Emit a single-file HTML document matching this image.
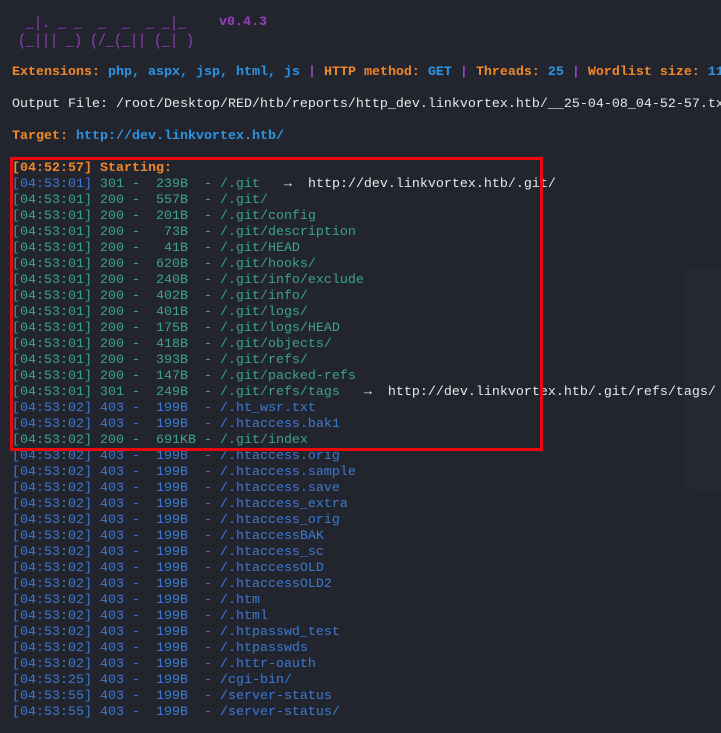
<!DOCTYPE html>
<html><head><meta charset="utf-8"><style>
html,body{margin:0;padding:0;background:#23252e;width:721px;height:733px;overflow:hidden;}
body{position:relative;font-family:"Liberation Mono","DejaVu Sans Mono",monospace;font-size:13.33px;}
.l{position:absolute;left:12px;white-space:pre;line-height:16px;}
.o{color:#f0882a;font-weight:bold}
.b{color:#2b96e6;font-weight:bold}
.p{color:#9a3fc0;font-weight:bold}
.w{color:#e8e8e8}
.t{color:#3aa38e}
.u{color:#3b7ad4}
.box{position:absolute;left:10px;top:157px;width:527px;height:288px;border:3px solid #e8080d;}
.sb{position:absolute;left:683px;top:268px;width:60px;height:222px;border-radius:12px;background:#252830;}
</style></head><body>
<div class="sb"></div>
<div class="l p" style="top:15px;left:18px;font-weight:normal;line-height:15px;font-size:13.33px;transform:scaleY(1.2);transform-origin:0 0"> _|. _ _  _  _  _ _|_
(_||| _) (/_(_|| (_| )</div>
<div class="l p" style="top:15px;left:219px">v0.4.3</div>
<div class="l" style="top:65px"><span class="o">Extensions: </span><span class="b">php, aspx, jsp, html, js</span><span class="p"> | </span><span class="o">HTTP method: </span><span class="b">GET</span><span class="p"> | </span><span class="o">Threads: </span><span class="b">25</span><span class="p"> | </span><span class="o">Wordlist size: </span><span class="b">11460</span></div>
<div class="l w" style="top:97px">Output File: /root/Desktop/RED/htb/reports/http_dev.linkvortex.htb/__25-04-08_04-52-57.txt</div>
<div class="l" style="top:129px"><span class="o">Target: </span><span class="b">http://dev.linkvortex.htb/</span></div>
<div class="l" style="top:161px"><span class="o">[04:52:57] Starting: </span></div>
<div class="l" style="top:177px"><span class="u">[04:53:01] </span><span class="t">301 -  239B  - /.git</span><span class="w">   <b>→</b>  http://dev.linkvortex.htb/.git/</span>
<span class="t">[04:53:01] 200 -  557B  - /.git/
[04:53:01] 200 -  201B  - /.git/config
[04:53:01] 200 -   73B  - /.git/description
[04:53:01] 200 -   41B  - /.git/HEAD
[04:53:01] 200 -  620B  - /.git/hooks/
[04:53:01] 200 -  240B  - /.git/info/exclude
[04:53:01] 200 -  402B  - /.git/info/
[04:53:01] 200 -  401B  - /.git/logs/
[04:53:01] 200 -  175B  - /.git/logs/HEAD
[04:53:01] 200 -  418B  - /.git/objects/
[04:53:01] 200 -  393B  - /.git/refs/
[04:53:01] 200 -  147B  - /.git/packed-refs
[04:53:01] 301 -  249B  - /.git/refs/tags</span><span class="w">   <b>→</b>  http://dev.linkvortex.htb/.git/refs/tags/</span>
<span class="u">[04:53:02] 403 -  199B  - /.ht_wsr.txt
[04:53:02] 403 -  199B  - /.htaccess.bak1</span>
<span class="t">[04:53:02] 200 -  691KB - /.git/index</span>
<span class="u">[04:53:02] 403 -  199B  - /.htaccess.orig
[04:53:02] 403 -  199B  - /.htaccess.sample
[04:53:02] 403 -  199B  - /.htaccess.save
[04:53:02] 403 -  199B  - /.htaccess_extra
[04:53:02] 403 -  199B  - /.htaccess_orig
[04:53:02] 403 -  199B  - /.htaccessBAK
[04:53:02] 403 -  199B  - /.htaccess_sc
[04:53:02] 403 -  199B  - /.htaccessOLD
[04:53:02] 403 -  199B  - /.htaccessOLD2
[04:53:02] 403 -  199B  - /.htm
[04:53:02] 403 -  199B  - /.html
[04:53:02] 403 -  199B  - /.htpasswd_test
[04:53:02] 403 -  199B  - /.htpasswds
[04:53:02] 403 -  199B  - /.httr-oauth
[04:53:25] 403 -  199B  - /cgi-bin/
[04:53:55] 403 -  199B  - /server-status
[04:53:55] 403 -  199B  - /server-status/</span></div>
<div class="box"></div>
</body></html>
